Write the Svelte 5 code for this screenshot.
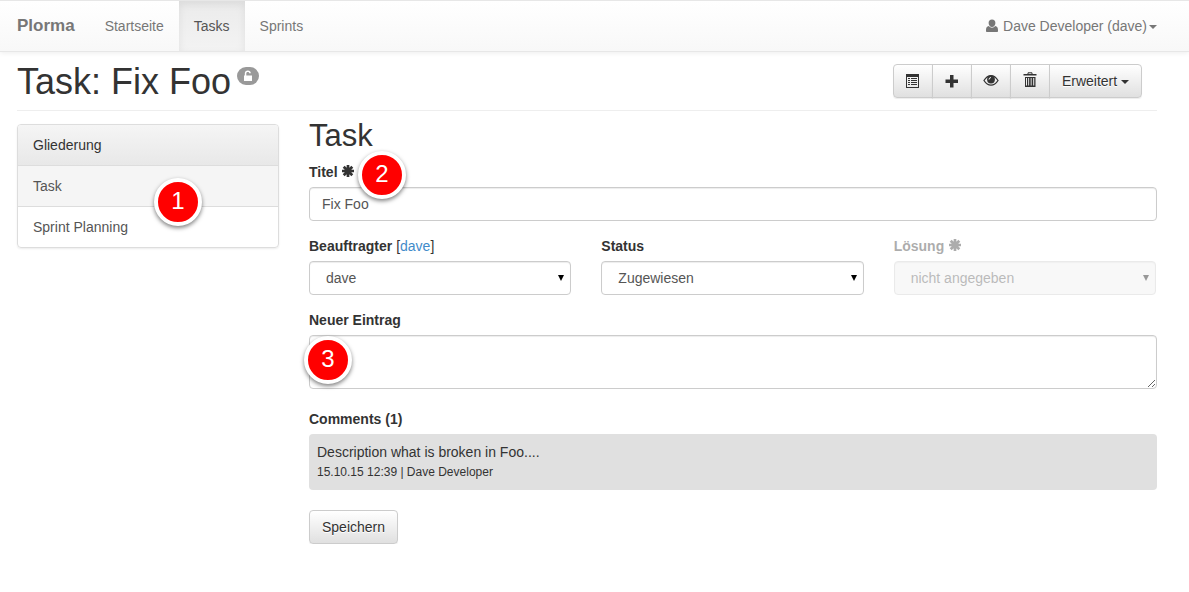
<script>
  const navItems = [
    { label: 'Startseite', active: false },
    { label: 'Tasks', active: true },
    { label: 'Sprints', active: false }
  ];
  let title = $state('Fix Foo');
  let entry = $state('');
</script>

{#snippet asterisk()}
  <svg class="asterisk" viewBox="0 0 14 14" role="img" aria-label="Pflichtfeld">
    <path d="M7 1v12M1 7h12M2.700 2.700l8.600 8.600M11.300 2.700l-8.600 8.600" fill="none" stroke="currentColor" stroke-width="2.700" />
  </svg>
{/snippet}

<nav class="navbar">
  <div class="container bar">
    <a class="brand" href="#home">Plorma</a>
    <ul class="links">
      {#each navItems as item}
        <li><a href="#{item.label}" class:active={item.active}>{item.label}</a></li>
      {/each}
    </ul>
    <a class="user" href="#user">
      <svg class="icon" viewBox="0 0 14 14" aria-hidden="true">
        <path fill="currentColor" d="M7 .5c2.200 0 3.400 1.300 3.400 3.400S9 8 7 8 3.600 6 3.600 3.900 4.800.5 7 .5zM3.800 7Q5 8.800 7 8.800T10.200 7c2 .4 2.800 1.800 2.800 4v1.200q0 .8-.8.800H1.800Q1 13 1 12.200V11c0-2.200.8-3.600 2.800-4z" />
      </svg>
      Dave Developer (dave)<span class="caret"></span>
    </a>
  </div>
</nav>

<main class="container">
  <header class="page-header">
    <h1>Task: Fix Foo<span class="badge">
      <svg viewBox="0 0 12 12" role="img" aria-label="Offen">
        <path fill="#fff" d="M2 5.500h.8V3.400C2.800 1.500 4 .5 5.800.5s3 1 3 2.700H7.200C7.200 2.300 6.700 1.900 5.800 1.900S4.300 2.400 4.300 3.400v2.100H10V11H2z" />
      </svg>
    </span></h1>
    <div class="btn-group">
      <button type="button" class="btn" aria-label="Liste">
        <svg class="icon" viewBox="0 0 14 14" aria-hidden="true">
          <path fill="currentColor" fill-rule="evenodd" d="M0 0h13v14H0zM1 3v10h11V3zM2 4h2v1H2zM5 4h6v1H5zM2 6h2v1H2zM5 6h6v1H5zM2 8h2v1H2zM5 8h6v1H5zM2 10h2v1H2zM5 10h6v1H5z" />
        </svg>
      </button>
      <button type="button" class="btn" aria-label="Neu">
        <svg class="icon" viewBox="0 0 14 14" aria-hidden="true">
          <path fill="currentColor" d="M5 1h3.500v4.500H13V9H8.500v4.500H5V9H.5V5.500H5z" />
        </svg>
      </button>
      <button type="button" class="btn raised" aria-label="Beobachten">
        <svg class="icon wide" viewBox="0 0 16 14" aria-hidden="true">
          <path fill="none" stroke="currentColor" stroke-width="1.300" d="M1 7.500Q4 2.600 8 2.600T15 7.500Q12 12.200 8 12.200T1 7.500z" />
          <circle cx="8" cy="6.500" r="3.900" fill="currentColor" />
          <path fill="none" stroke="#f4f4f4" stroke-width="1" d="M6 6.600Q6 4.600 8 4.500" />
        </svg>
      </button>
      <button type="button" class="btn raised" aria-label="Löschen">
        <svg class="icon" viewBox="0 0 14 16" aria-hidden="true">
          <path fill="none" stroke="currentColor" d="M5 2V.8h4V2" />
          <path fill="currentColor" fill-rule="evenodd" d="M.5 2h13v1.500H.5zM2 5h10.500v10H2zM3 6v7.500h1V6zM5.200 6v7.500h.9V6zM7.700 6v7.500h.9V6zM10.200 6v7.500h1V6z" />
        </svg>
      </button>
      <button type="button" class="btn">Erweitert <span class="caret"></span></button>
    </div>
  </header>

  <div class="columns">
    <aside class="outline">
      <div class="outline-title">Gliederung</div>
      <a class="current" href="#task">Task</a>
      <a href="#planning">Sprint Planning</a>
      <span class="marker marker-outline">1</span>
    </aside>

    <form class="task" onsubmit={(e) => e.preventDefault()}>
      <h2>Task</h2>
      <div class="group">
        <label for="title">Titel {@render asterisk()}</label>
        <input id="title" class="control" type="text" bind:value={title} />
        <span class="marker marker-title">2</span>
      </div>
      <div class="fields">
        <div class="group">
          <div class="caption"><label for="assignee">Beauftragter</label> [<a href="#dave">dave</a>]</div>
          <div class="select">
            <select id="assignee" class="control"><option>dave</option></select>
          </div>
        </div>
        <div class="group">
          <label for="status">Status</label>
          <div class="select">
            <select id="status" class="control"><option>Zugewiesen</option></select>
          </div>
        </div>
        <div class="group disabled">
          <label for="resolution">Lösung {@render asterisk()}</label>
          <div class="select">
            <select id="resolution" class="control" disabled><option>nicht angegeben</option></select>
          </div>
        </div>
      </div>
      <div class="group">
        <label for="entry">Neuer Eintrag</label>
        <textarea id="entry" class="control" rows="2" bind:value={entry}></textarea>
        <span class="marker marker-entry">3</span>
      </div>
      <section class="comments">
        <h3>Comments (1)</h3>
        <article>
          <p>Description what is broken in Foo....</p>
          <small>15.10.15 12:39 | Dave Developer</small>
        </article>
      </section>
      <button class="btn save" type="submit">Speichern</button>
    </form>
  </div>
</main>

<style>
  :global(body) {
    margin: 0;
    background: #fff;
    color: #333;
    font: 14px/20px "Liberation Sans", Arial, sans-serif;
  }
  :global(#app *) { box-sizing: border-box; }
  a { color: #428bca; text-decoration: none; }
  .container { padding: 0 32px 0 17px; }
  .navbar {
    border: 1px solid #e7e7e7;
    border-width: 1px 0;
    background: linear-gradient(#fff, #f8f8f8);
    box-shadow: 0 1px 5px rgba(0, 0, 0, 0.075);
  }
  .bar { display: flex; }
  .bar a { color: #777; padding: 15px; }
  .bar .brand { padding-left: 0; font-size: 17px; font-weight: bold; }
  .bar .user { margin-left: auto; padding-right: 0; }
  .links { display: flex; margin: 0; padding: 0; list-style: none; }
  .links a { display: block; }
  .links .active {
    color: #555;
    background: linear-gradient(#ebebeb, #f3f3f3);
    box-shadow: inset 0 3px 9px rgba(0, 0, 0, 0.075);
  }
  .icon { width: 14px; height: 14px; vertical-align: -2px; }
  .wide { width: 16px; margin: 0 -1px; }
  .raised .icon { height: 16px; vertical-align: -2px; }
  .caret {
    display: inline-block;
    vertical-align: middle;
    border: 4px solid transparent;
    border-top-color: currentColor;
    border-bottom: 0;
  }
  .bar .caret { margin-left: 2px; }
  .page-header {
    display: flex;
    justify-content: space-between;
    align-items: flex-start;
    margin-bottom: 13px;
    padding: 12px 15px 12px 0;
    border-bottom: 1px solid #eee;
  }
  h1, h2, h3 { margin: 0; font-weight: normal; }
  h1 { display: flex; align-items: flex-start; gap: 6px; font-size: 36px; line-height: 36px; margin-bottom: -2px; }
  .badge {
    display: flex;
    justify-content: center;
    align-items: center;
    width: 22px;
    height: 18px;
    margin-top: 3px;
    border-radius: 10px;
    background: #999;
  }
  .badge svg { width: 12px; height: 12px; }
  .btn {
    height: 34px;
    padding: 0 12px;
    border: 1px solid #ccc;
    border-radius: 4px;
    background: linear-gradient(#fff, #e0e0e0);
    box-shadow: inset 0 1px 0 rgba(255, 255, 255, 0.15), 0 1px 1px rgba(0, 0, 0, 0.075);
    color: #333;
    font: inherit;
    text-shadow: 0 1px 0 #fff;
  }
  .btn-group { display: flex; }
  .btn-group .btn + .btn { margin-left: -1px; }
  .btn-group .btn:not(:first-child) { border-top-left-radius: 0; border-bottom-left-radius: 0; }
  .btn-group .btn:not(:last-child) { border-top-right-radius: 0; border-bottom-right-radius: 0; }
  .columns { display: grid; grid-template-columns: minmax(0, 262fr) minmax(0, 848fr); gap: 30px; align-items: start; }
  .outline {
    position: relative;
    border: 1px solid #ddd;
    border-radius: 4px;
    box-shadow: 0 1px 2px rgba(0, 0, 0, 0.075);
  }
  .outline-title { padding: 10px 15px; background: linear-gradient(#f5f5f5, #e8e8e8); border-radius: 3px 3px 0 0; }
  .outline a { display: block; padding: 10px 15px; border-top: 1px solid #ddd; color: #555; }
  .outline .current { background: #f5f5f5; }
  .task h2 { font-size: 31px; line-height: 24px; margin-bottom: 14px; }
  .group { position: relative; margin-bottom: 15px; }
  label, .caption { display: block; margin-bottom: 5px; }
  label, h3 { font-weight: bold; font-size: 14px; }
  .caption label { display: inline; }
  .asterisk { width: 14px; height: 14px; vertical-align: -1px; }
  .control {
    display: block;
    width: 100%;
    height: 34px;
    padding: 6px 12px;
    border: 1px solid #ccc;
    border-radius: 4px;
    background: #fff;
    box-shadow: inset 0 1px 1px rgba(0, 0, 0, 0.075);
    color: #555;
    font: inherit;
  }
  select.control { appearance: none; padding-left: 16px; }
  .select { position: relative; }
  .select::after {
    content: "";
    position: absolute;
    right: 7px;
    top: 14px;
    border: 3px solid transparent;
    border-top: 6px solid #000;
    border-bottom: 0;
    pointer-events: none;
  }
  .fields { display: grid; grid-template-columns: repeat(3, minmax(0, 1fr)); gap: 30px; padding-right: 1px; }
  .disabled { opacity: 0.4; }
  .disabled .control { background: #eee; opacity: 1; }
  textarea.control { height: 54px; resize: vertical; }
  .comments { margin: 20px 0; }
  h3 { margin-bottom: 5px; }
  article { padding: 8px; border-radius: 4px; background: #e0e0e0; }
  p { margin: 0; }
  small { display: block; font-size: 12px; }
  .marker {
    position: absolute;
    width: 48px;
    height: 48px;
    border: 4px solid #fff;
    border-radius: 50%;
    background: #f00;
    box-shadow: 0 2px 4px rgba(0, 0, 0, 0.5);
    color: #fff;
    font-size: 24px;
    line-height: 38px;
    text-align: center;
  }
  .marker-outline { left: 136px; top: 53px; }
  .marker-title { left: 49px; top: -11px; }
  .marker-entry { left: -5px; top: 26px; }
</style>
